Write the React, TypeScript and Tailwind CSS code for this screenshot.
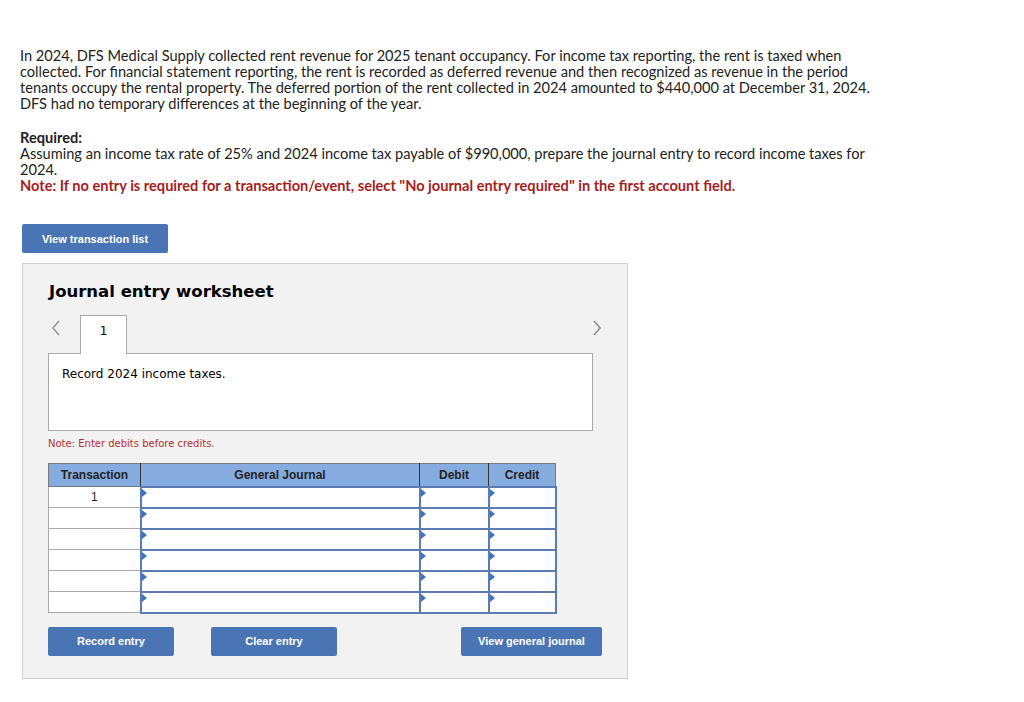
import React from 'react'

const ROWS = 6

function InputCell({ width }: { width: string }) {
  return (
    <td className={`relative ${width} h-[21px] p-0 bg-white border-2 border-[#5b7cb3]`}>
      <span className="absolute left-0 top-[1px] w-0 h-0 border-y-[4px] border-y-transparent border-l-[5px] border-l-[#3d72c4]" />
    </td>
  )
}

function BlueButton({ label, width }: { label: string; width: string }) {
  return (
    <button
      className={`${width} h-[29px] rounded-[2px] bg-[#4a75b5] text-white text-[11px] font-bold font-['Liberation_Sans',Arial,sans-serif]`}
    >
      {label}
    </button>
  )
}

export default function App() {
  return (
    <div className="w-full min-h-[702px] bg-white pl-[20px] pt-[48px] text-[#222] font-['Lato',sans-serif] text-[14.6px] leading-[16px]">
      <p className="w-[880px]">
        In 2024, DFS Medical Supply collected rent revenue for 2025 tenant occupancy. For income tax reporting, the rent is taxed when
        <br />
        collected. For financial statement reporting, the rent is recorded as deferred revenue and then recognized as revenue in the period
        <br />
        tenants occupy the rental property. The deferred portion of the rent collected in 2024 amounted to $440,000 at December 31, 2024.
        <br />
        DFS had no temporary differences at the beginning of the year.
      </p>

      <div className="mt-[18px] w-[880px]">
        <p className="font-bold">Required:</p>
        <p>
          Assuming an income tax rate of 25% and 2024 income tax payable of $990,000, prepare the journal entry to record income taxes for
          <br />
          2024.
        </p>
        <p className="font-bold text-[#a51d1d]">
          Note: If no entry is required for a transaction/event, select "No journal entry required" in the first account field.
        </p>
      </div>

      <div className="mt-[30px] ml-[2px]">
        <BlueButton label="View transaction list" width="w-[146px] h-[28px]" />
      </div>

      <div className="mt-[10px] ml-[2px] w-[606px] h-[416px] bg-[#f2f2f2] border border-[#cfcfcf] pl-[25px] pt-[18px] font-['DejaVu_Sans',Verdana,sans-serif]">
        <h2 className="ml-px text-[16.5px] leading-[20px] font-bold text-black">Journal entry worksheet</h2>

        <div className="mt-[13px] flex w-[555px]">
          <span className="w-[32px] pt-[3px] pl-[2px] text-[#9a9a9a]">
            <svg width="12" height="20" viewBox="0 0 12 20" fill="none" stroke="currentColor" strokeWidth="1.6">
              <path d="M9 3 L3 10 L9 17" />
            </svg>
          </span>
          <div className="relative z-10 -mb-px w-[47px] h-[39px] bg-white border border-b-0 border-[#a9a9a9] flex justify-center pt-[7px] text-[12px] leading-[16px] text-black">
            1
          </div>
          <div className="flex-1" />
          <span className="pt-[3px] text-[#8a8a8a]">
            <svg width="12" height="20" viewBox="0 0 12 20" fill="none" stroke="currentColor" strokeWidth="1.6">
              <path d="M3 3 L9 10 L3 17" />
            </svg>
          </span>
        </div>

        <div className="w-[545px] h-[78px] bg-white border border-[#a9a9a9] pl-[13px] pt-[12px] text-[12px] leading-[16px] text-black">
          Record 2024 income taxes.
        </div>

        <p className="mt-[6px] text-[10px] leading-[14px] text-[#b52f2f]">Note: Enter debits before credits.</p>

        <table className="mt-[12px] border-collapse font-['Liberation_Sans',Arial,sans-serif] text-[12px]">
          <thead>
            <tr className="h-[23px] bg-[#86acdf] text-[#222]">
              <th className="w-[92px] p-0 border border-[#7a7a7a] border-r-[#333] font-bold">Transaction</th>
              <th className="w-[279px] p-0 border border-[#7a7a7a] border-r-[#333] font-bold">General Journal</th>
              <th className="w-[69px] p-0 border border-[#7a7a7a] border-r-[#333] font-bold">Debit</th>
              <th className="w-[67px] p-0 border border-[#7a7a7a] font-bold">Credit</th>
            </tr>
          </thead>
          <tbody>
            {Array.from({ length: ROWS }).map((_, i) => (
              <tr key={i} className="h-[21px]">
                <td className="w-[92px] p-0 bg-white border border-[#a9a9a9] text-center text-[12px] leading-[14px] text-[#222] align-top pt-[3px]">
                  {i === 0 ? '1' : ''}
                </td>
                <InputCell width="w-[279px]" />
                <InputCell width="w-[69px]" />
                <InputCell width="w-[67px]" />
              </tr>
            ))}
          </tbody>
        </table>

        <div className="mt-[13px] flex w-[554px]">
          <BlueButton label="Record entry" width="w-[126px]" />
          <div className="ml-[37px]">
            <BlueButton label="Clear entry" width="w-[126px]" />
          </div>
          <div className="ml-auto">
            <BlueButton label="View general journal" width="w-[141px]" />
          </div>
        </div>
      </div>
    </div>
  )
}
